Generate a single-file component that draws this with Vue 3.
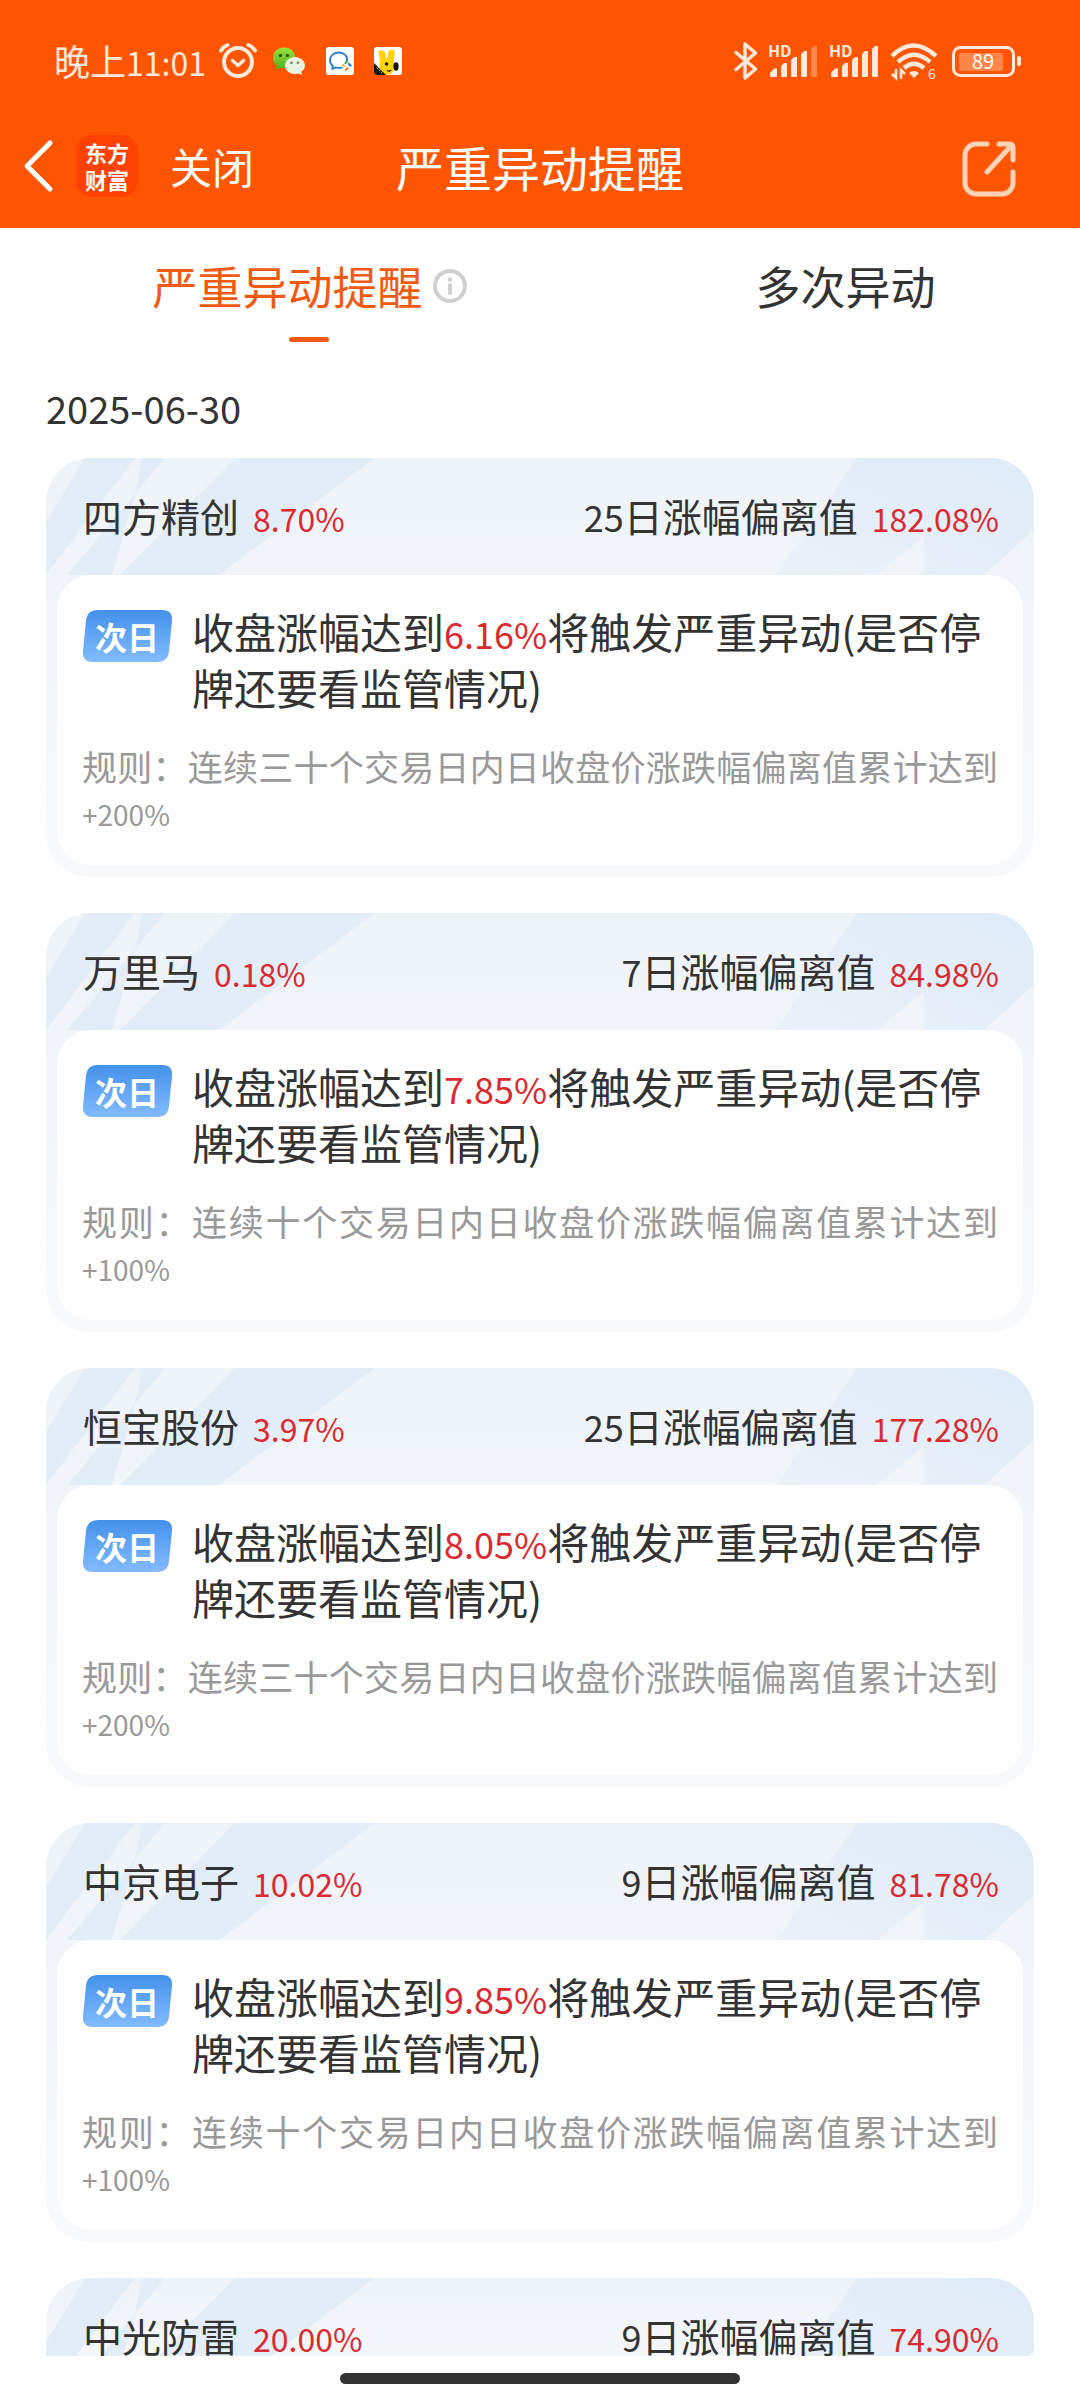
<template>
  <div class="page">
    <header class="header">
      <div class="status-bar">
        <div class="status-left">
          <span class="time">晚上<span class="clock">11:01</span></span>
          <svg class="alarm" width="40" height="38" viewBox="0 0 40 38" fill="none" stroke="#ffe9db" stroke-linecap="round" stroke-linejoin="round">
            <circle cx="20" cy="20" r="14" stroke-width="4"></circle>
            <path d="M3 8.500 Q5.500 4.500 9.500 3M37 8.500 Q34.500 4.500 30.500 3" stroke-width="4"></path>
            <path d="M14.500 18.500l5.500 5 5.500-5" stroke-width="3.500"></path>
          </svg>
          <svg class="app-icon" width="34" height="28" viewBox="0 0 34 28">
            <defs>
              <linearGradient id="wechatGreen" x1="0" y1="0" x2="0" y2="1">
                <stop offset="0" stop-color="#9be33c"></stop>
                <stop offset="1" stop-color="#4fae1c"></stop>
              </linearGradient>
            </defs>
            <path d="M12 0.500C5.500 0.500 1 5 1 11c0 3.500 1.500 6 4 8l-1 4 4.500-2.200c1.200.3 2.300.4 3.500.4 6.500 0 11.500-4.500 11.500-10.200S18.500.5 12 .5z" fill="url(#wechatGreen)"></path>
            <circle cx="8.500" cy="8.500" r="1.700" fill="#2f5d12"></circle>
            <circle cx="15.500" cy="8.500" r="1.700" fill="#2f5d12"></circle>
            <path d="M23 10c-5.500 0-10 3.700-10 8.500S17.500 27 23 27c1.200 0 2.300-.2 3.300-.5l3.700 1.500-.8-3.200c2.300-1.500 3.800-3.700 3.800-6.300C33 13.700 28.500 10 23 10z" fill="#e9f3e2"></path>
            <circle cx="19.500" cy="15.800" r="1.400" fill="#7d8a78"></circle>
            <circle cx="26" cy="15.800" r="1.400" fill="#7d8a78"></circle>
          </svg>
          <svg class="app-icon" width="28" height="28" viewBox="0 0 28 28" fill="none">
            <rect width="28" height="28" rx="3" fill="#fff"></rect>
            <path d="M21 14c.8-5-3-8.500-8-8.500-5.200 0-9 3.200-9 7.800 0 2.500 1 4.300 2.800 5.700l-.6 3 3.300-1.600c1.700.6 3.800.8 6.300.2" stroke="#2a7fd0" stroke-width="1.800" stroke-linecap="round" stroke-linejoin="round"></path>
            <path d="M19.500 16l1.500-1.500" stroke="#3fae4a" stroke-width="2.400" stroke-linecap="round"></path>
            <path d="M23 17l1.500 1.500" stroke="#2a7fd0" stroke-width="2.400" stroke-linecap="round"></path>
            <path d="M21.500 21.500l-1.500 1" stroke="#f0802c" stroke-width="2.400" stroke-linecap="round"></path>
            <path d="M18 19l-1-1" stroke="#f5bd28" stroke-width="2.400" stroke-linecap="round"></path>
          </svg>
          <svg class="app-icon" width="28" height="28" viewBox="0 0 28 28">
            <defs>
              <clipPath id="rabbitClip"><rect width="28" height="28" rx="3"></rect></clipPath>
            </defs>
            <g clip-path="url(#rabbitClip)">
              <rect width="28" height="28" fill="#fff"></rect>
              <path d="M4.500 5c0-2.500 5-2.500 6.200 0l2 8 2-9c1-2 6-1.500 6 1l-1 11c1.500 8-2 12-7 12-6 0-9-5-6.500-12z" fill="#ffd200"></path>
              <ellipse cx="22" cy="19.500" rx="2.600" ry="4.200" fill="#15130f"></ellipse>
              <circle cx="12.500" cy="17" r="1.700" fill="#15130f"></circle>
              <path d="M13 23.500q2 1.500 4-.5" stroke="#15130f" stroke-width="1.200" fill="none"></path>
              <path d="M0 16l12 12H0z" fill="#1a1614"></path>
              <path d="M2.500 20.500l5.500 5.500M4 19.800l5 5" stroke="#b9b2ac" stroke-width="1" stroke-dasharray="2 1"></path>
            </g>
          </svg>
        </div>
        <div class="status-right">
          <svg width="24" height="38" viewBox="0 0 24 38" fill="none" stroke="#ffe9db" stroke-width="3.500" stroke-linejoin="round" stroke-linecap="round">
            <path d="M2 10.500L21.500 27 11 36V2l10.500 9L2 27.500"></path>
          </svg>
          <svg v-for="(bars, i) in signals" :key="i" class="signal" width="51" height="34" viewBox="0 0 51 34" fill="#ffe9db">
            <text x="0" y="13" class="hd">HD</text>
            <path d="M2 32v-3l4-4.500h3V32a1 1 0 0 1-1 1H3a1 1 0 0 1-1-1z"></path>
            <path d="M13 32V22l3-3h3v13a1 1 0 0 1-1 1h-4a1 1 0 0 1-1-1z"></path>
            <path d="M23 32V16l3-3h3v19a1 1 0 0 1-1 1h-4a1 1 0 0 1-1-1z"></path>
            <path d="M33 32V10l3-3h3v25a1 1 0 0 1-1 1h-4a1 1 0 0 1-1-1z"></path>
            <path d="M43 32V5l3-3h3v30a1 1 0 0 1-1 1h-4a1 1 0 0 1-1-1z" :opacity="bars > 4 ? 1 : 0.35"></path>
          </svg>
          <svg class="wifi" width="48" height="38" viewBox="0 0 48 38" fill="none" stroke="#ffe9db" stroke-width="4.500">
            <path d="M2 14q21-21 44 0"></path>
            <path d="M8 20q16-14.500 32 0"></path>
            <path d="M14 26q10-8.500 20 0"></path>
            <path d="M19 31q5-4 10 0l-5 5z" fill="#ffe9db" stroke="none"></path>
            <path d="M6 27v9l-4-4M11 37v-9l4 4" stroke-width="2.500"></path>
            <text x="38" y="37" class="wifi-gen">6</text>
          </svg>
          <svg class="battery" width="70" height="32" viewBox="0 0 70 32">
            <rect x="1.500" y="2.500" width="60" height="28" rx="7" fill="none" stroke="#ffe9db" stroke-width="3"></rect>
            <rect x="7" y="8" width="44" height="18" rx="2" fill="#ff8648"></rect>
            <rect x="65" y="11" width="4" height="10" rx="2" fill="#ffe9db"></rect>
            <text x="31" y="24" class="battery-level">89</text>
          </svg>
        </div>
      </div>

      <nav class="nav">
        <div class="nav-side">
          <button class="btn-back" aria-label="返回">
            <svg width="30" height="52" viewBox="0 0 30 52" fill="none" stroke="#fff" stroke-width="5" stroke-linecap="round" stroke-linejoin="round">
              <path d="M26 3L3 26l23 23"></path>
            </svg>
          </button>
          <span class="logo"><span>东方</span><span>财富</span></span>
          <button class="btn-close">关闭</button>
        </div>
        <h1>严重异动提醒</h1>
        <div class="nav-side nav-end">
          <button class="btn-share" aria-label="分享">
            <svg width="54" height="56" viewBox="0 0 54 56" fill="none" stroke="#ffd2b8" stroke-width="5" stroke-linecap="round" stroke-linejoin="round">
              <path d="M25 3H14A11 11 0 0 0 3 14v28a11 11 0 0 0 11 11h26a11 11 0 0 0 11-11V31"></path>
              <path d="M37 3h11a3 3 0 0 1 3 3v13M48 6L25 31"></path>
            </svg>
          </button>
        </div>
      </nav>
    </header>

    <div class="tabs">
      <button
          v-for="tab in tabs"
          :key="tab"
          class="tab"
          :class="{ active: tab === activeTab }"
          @click="activeTab = tab"
      >
        <span class="tab-label">
          {{ tab }}
          <svg v-if="tab === tabs[0]" width="34" height="34" viewBox="0 0 34 34" fill="none" stroke="#d0d0d0">
            <circle cx="17" cy="17" r="15" stroke-width="4"></circle>
            <path d="M17 16v8" stroke-width="4" stroke-linecap="round"></path>
            <circle cx="17" cy="10.500" r="2.300" fill="#d0d0d0" stroke="none"></circle>
          </svg>
        </span>
      </button>
    </div>

    <main class="list">
      <h2 class="date">2025-06-30</h2>

      <article v-for="stock in stocks" :key="stock.name" class="card">
        <svg class="decor decor-left" width="330" height="117" viewBox="0 0 330 117">
          <path d="M39 0h50L0 117V64z"></path>
          <path d="M96 0h23L89 36z"></path>
          <path d="M89 36L66 117H21z"></path>
          <path d="M189 0h140L173 117H74z"></path>
        </svg>
        <svg class="decor decor-right" width="260" height="117" viewBox="0 0 260 117">
          <defs>
            <linearGradient id="decorFade" x1="0" y1="1" x2="1" y2="0">
              <stop offset="0" stop-color="#ebf1f9"></stop>
              <stop offset="1" stop-color="#deebf8"></stop>
            </linearGradient>
          </defs>
          <path d="M83 0h177v72l-50 45h-60V79l-48 38H2z" fill="url(#decorFade)"></path>
        </svg>

        <div class="card-header">
          <span class="pair">{{ stock.name }}<span class="num red">{{ stock.change }}</span></span>
          <span class="pair">
            <span><span class="num-lg">{{ stock.days }}</span>日涨幅偏离值</span>
            <span class="num red">{{ stock.deviation }}</span>
          </span>
        </div>

        <div v-if="stock.trigger" class="card-body">
          <div class="alert">
            <span class="badge">
              <svg class="badge-bg" viewBox="0 0 90 52" preserveAspectRatio="none">
                <defs>
                  <linearGradient id="badgeBlue" x1="0" y1="0" x2="0" y2="1">
                    <stop offset="0" stop-color="#4391ea"></stop>
                    <stop offset="1" stop-color="#82bbff"></stop>
                  </linearGradient>
                </defs>
                <path d="M16 0h64q11 0 10 11l-3 30q-1 11-12 11H11Q0 52 1 41L4 11Q5 0 16 0z" fill="url(#badgeBlue)"></path>
              </svg>
              <span class="badge-text">次日</span>
            </span>
            <p>收盘涨幅达到<span class="num-lg red">{{ stock.trigger }}</span>将触发严重异动(是否停牌还要看监管情况)</p>
          </div>
          <p class="rule">规则：连续{{ stock.period }}个交易日内日收盘价涨跌幅偏离值累计达到<span class="num-sm">{{ stock.limit }}</span></p>
        </div>
      </article>
    </main>

    <footer class="home-indicator"><span class="home-bar"></span></footer>
  </div>
</template>

<script setup>
import { ref } from 'vue'

const tabs = ['严重异动提醒', '多次异动']
const activeTab = ref(tabs[0])

const signals = [4, 5]

const stocks = [
  { name: '四方精创', change: '8.70%', days: 25, deviation: '182.08%', trigger: '6.16%', period: '三十', limit: '+200%' },
  { name: '万里马', change: '0.18%', days: 7, deviation: '84.98%', trigger: '7.85%', period: '十', limit: '+100%' },
  { name: '恒宝股份', change: '3.97%', days: 25, deviation: '177.28%', trigger: '8.05%', period: '三十', limit: '+200%' },
  { name: '中京电子', change: '10.02%', days: 9, deviation: '81.78%', trigger: '9.85%', period: '十', limit: '+100%' },
  { name: '中光防雷', change: '20.00%', days: 9, deviation: '74.90%' }
]
</script>

<style>
body {
  margin: 0;
  background: #fefefe;
}
</style>

<style scoped>
.page {
  height: 100vh;
  display: flex;
  flex-direction: column;
  overflow: hidden;
  background: #fefefe;
  color: #333;
  font-family: "Noto Sans CJK SC", sans-serif;
}

button {
  padding: 0;
  border: none;
  background: none;
  color: inherit;
  font-family: inherit;
  cursor: pointer;
}

svg {
  display: block;
  flex: none;
  overflow: visible;
}

h1,
h2,
p {
  margin: 0;
  font-weight: 400;
}

.header {
  flex: none;
  background: #ff5500;
  color: #fff;
}

.status-bar {
  height: 108px;
  padding: 14px 58px 0 54px;
  box-sizing: border-box;
  display: flex;
  justify-content: space-between;
  align-items: center;
}

.status-left,
.status-right {
  display: flex;
  align-items: center;
}

.time {
  color: #ffe9db;
  font-size: 36px;
  line-height: 40px;
}

.clock {
  font-size: 32px;
}

.alarm {
  margin: 0 14px 0 12px;
}

.app-icon {
  margin-right: 20px;
}

.signal {
  margin-left: 10px;
}

.wifi {
  margin-left: 10px;
}

.battery {
  margin-left: 14px;
}

.hd {
  font-size: 16px;
  font-weight: 700;
}

.wifi-gen {
  font-size: 14px;
  fill: #ffe9db;
  stroke: none;
}

.battery-level {
  font-size: 20px;
  fill: #fff;
  text-anchor: middle;
}

.nav {
  height: 120px;
  padding: 0 24px 4px;
  box-sizing: border-box;
  display: flex;
  align-items: center;
}

.nav h1 {
  font-size: 48px;
  line-height: 60px;
}

.nav-side {
  flex: 1;
  display: flex;
  align-items: center;
}

.nav-end {
  justify-content: flex-end;
  padding-top: 6px;
}

.btn-share {
  margin-right: 40px;
}

.logo {
  width: 62px;
  height: 62px;
  margin: 0 32px 0 22px;
  border-radius: 16px;
  background: #ff4200;
  display: flex;
  flex-direction: column;
  align-items: center;
  justify-content: center;
  font-size: 22px;
  font-weight: 700;
  line-height: 27px;
}

.btn-close {
  font-size: 42px;
  line-height: 60px;
}

.tabs {
  flex: none;
  display: flex;
  justify-content: space-around;
  padding: 28px 0 0 8px;
}

.tab {
  position: relative;
  height: 94px;
  display: flex;
  align-items: flex-start;
  font-size: 45px;
  line-height: 60px;
}

.tab-label {
  display: flex;
  align-items: center;
  gap: 10px;
}

.tab.active {
  color: #f05a14;
}

.tab.active::after {
  content: "";
  position: absolute;
  left: 50%;
  bottom: 8px;
  width: 40px;
  height: 5px;
  border-radius: 3px;
  background: #f05a14;
  transform: translateX(-50%);
}

.list {
  flex: 1;
  min-height: 0;
  overflow: hidden;
  padding: 28px 46px 0;
}

.date {
  margin-bottom: 20px;
  font-size: 38px;
  line-height: 60px;
}

.card {
  position: relative;
  margin-bottom: 36px;
  padding: 0 11px 12px;
  border-radius: 44px;
  background: linear-gradient(#eef3f8, #f8f9fb);
  overflow: hidden;
}

.decor {
  position: absolute;
  top: 0;
}

.decor-left {
  left: 0;
  fill: #e3edf7;
}

.decor-right {
  right: 0;
}

.card-header {
  position: relative;
  height: 117px;
  padding: 0 24px 4px 26px;
  box-sizing: border-box;
  display: flex;
  justify-content: space-between;
  align-items: center;
  font-size: 39px;
  line-height: 56px;
}

.pair {
  display: flex;
  align-items: baseline;
  gap: 14px;
}

.num {
  font-size: 32px;
  line-height: 1;
}

.num-lg {
  font-size: 36px;
  line-height: 1;
}

.num-sm {
  font-size: 28px;
  line-height: 1;
}

.red {
  color: #d92b2f;
}

.card-body {
  position: relative;
  padding: 28px 25px 32px;
  border-radius: 34px;
  background: #fefefe;
}

.alert {
  display: flex;
  gap: 20px;
  font-size: 42px;
  line-height: 56px;
}

.alert p {
  flex: 1;
}

.badge {
  position: relative;
  flex: none;
  width: 90px;
  height: 52px;
  margin-top: 7px;
  color: #fff;
  font-size: 32px;
  font-weight: 700;
  line-height: 52px;
  text-align: center;
}

.badge-bg {
  position: absolute;
  top: 0;
  left: 0;
  width: 100%;
  height: 100%;
}

.badge-text {
  position: relative;
}

.rule {
  margin-top: 28px;
  color: #999;
  font-size: 35px;
  line-height: 45px;
  text-align: justify;
}

.home-indicator {
  flex: none;
  height: 44px;
  display: flex;
  justify-content: center;
  align-items: center;
  background: #fefefe;
}

.home-bar {
  width: 37%;
  height: 11px;
  border-radius: 6px;
  background: #333;
}
</style>
